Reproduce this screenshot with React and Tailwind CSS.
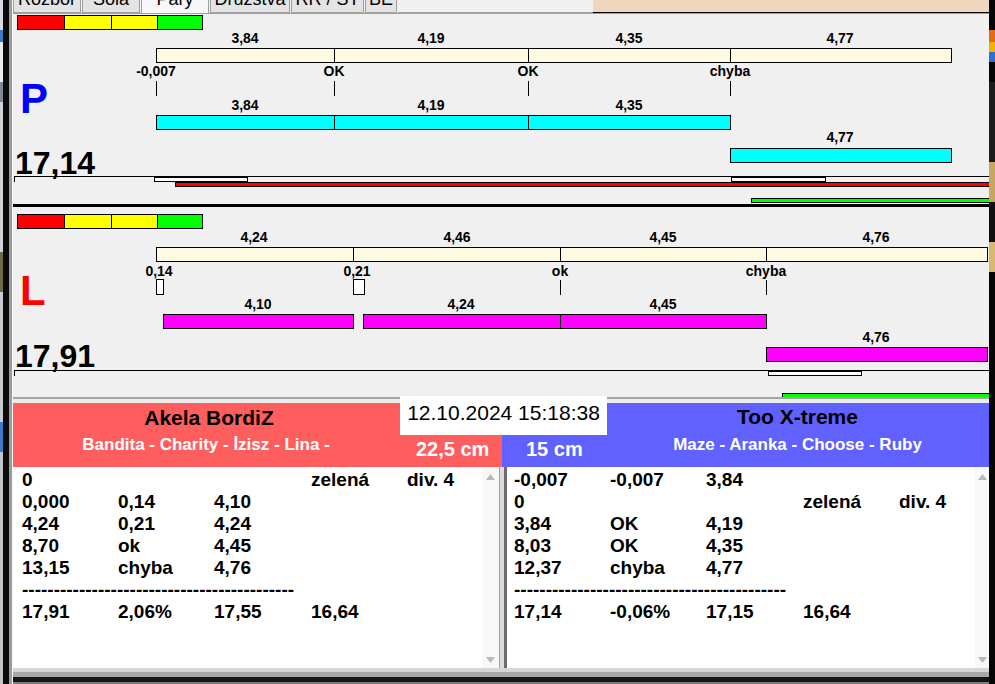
import React from 'react';

const X0 = 13;

const panelP = {
  origin: 14,
  bars: [
    { xs: [156, 334, 528, 730, 951], y: 48, h: 15, color: 'bg-[#fffbe3]' },
    { xs: [156, 334, 528, 730], y: 115, h: 15, color: 'bg-[#00ffff]' },
    { xs: [730, 951], y: 148, h: 15, color: 'bg-[#00ffff]' },
  ],
  labels: [
    { t: '3,84', cx: 245, y: 31 }, { t: '4,19', cx: 431, y: 31 },
    { t: '4,35', cx: 629, y: 31 }, { t: '4,77', cx: 840, y: 31 },
    { t: '-0,007', cx: 156, y: 64 }, { t: 'OK', cx: 334, y: 64 },
    { t: 'OK', cx: 528, y: 64 }, { t: 'chyba', cx: 730, y: 64 },
    { t: '3,84', cx: 245, y: 98 }, { t: '4,19', cx: 431, y: 98 },
    { t: '4,35', cx: 629, y: 98 }, { t: '4,77', cx: 840, y: 130 },
  ],
  ticks: [156, 334, 528, 730].map((x) => ({ x, y: 81, h: 15 })),
  boxes: [],
  line: 176,
  strips: [
    { x1: 154, x2: 247, y: 177, color: 'bg-white' },
    { x1: 731, x2: 825, y: 177, color: 'bg-white' },
    { x1: 175, x2: 1000, y: 182, color: 'bg-[#ff0000]' },
    { x1: 751, x2: 1000, y: 198, color: 'bg-[#00ff00]' },
  ],
};

const panelL = {
  origin: 207,
  bars: [
    { xs: [156, 353, 560, 766, 987], y: 247, h: 15, color: 'bg-[#fffbe3]' },
    { xs: [163, 353], y: 314, h: 15, color: 'bg-[#ff00ff]' },
    { xs: [363, 560, 766], y: 314, h: 15, color: 'bg-[#ff00ff]' },
    { xs: [766, 987], y: 347, h: 15, color: 'bg-[#ff00ff]' },
  ],
  labels: [
    { t: '4,24', cx: 254, y: 230 }, { t: '4,46', cx: 457, y: 230 },
    { t: '4,45', cx: 663, y: 230 }, { t: '4,76', cx: 876, y: 230 },
    { t: '0,14', cx: 159, y: 264 }, { t: '0,21', cx: 357, y: 264 },
    { t: 'ok', cx: 560, y: 264 }, { t: 'chyba', cx: 766, y: 264 },
    { t: '4,10', cx: 258, y: 297 }, { t: '4,24', cx: 461, y: 297 },
    { t: '4,45', cx: 663, y: 297 }, { t: '4,76', cx: 876, y: 330 },
  ],
  ticks: [560, 766].map((x) => ({ x, y: 280, h: 15 })),
  boxes: [
    { x1: 156, x2: 163, y: 279, h: 16 },
    { x1: 353, x2: 364, y: 279, h: 16 },
  ],
  line: 370,
  strips: [
    { x1: 768, x2: 861, y: 371, color: 'bg-white' },
    { x1: 782, x2: 1000, y: 393, color: 'bg-[#00ff00]' },
  ],
};

function ColorStrip() {
  return (
    <div className="flex h-[15px] w-[186px] border border-black">
      <div className="w-[46px] bg-[#ff0000]" />
      <div className="w-[47px] bg-[#ffff00] border-l border-black" />
      <div className="w-[46px] bg-[#ffff00] border-l border-black" />
      <div className="flex-1 bg-[#00ff00] border-l border-black" />
    </div>
  );
}

function Chart({ data }) {
  const o = data.origin;
  return (
    <div className="absolute inset-0">
      {data.bars.map((b, i) =>
        b.xs.slice(0, -1).map((x, j) => (
          <div
            key={`${i}-${j}`}
            className={`absolute border border-black ${b.color}`}
            style={{ left: x - X0, top: b.y - o, width: b.xs[j + 1] - x + 1, height: b.h }}
          />
        ))
      )}
      {data.labels.map((l, i) => (
        <div
          key={i}
          className="absolute -translate-x-1/2 whitespace-nowrap text-[14px] leading-[14px] font-bold text-black"
          style={{ left: l.cx - X0, top: l.y - o }}
        >
          {l.t}
        </div>
      ))}
      {data.ticks.map((t, i) => (
        <div key={i} className="absolute w-px bg-black" style={{ left: t.x - X0, top: t.y - o, height: t.h }} />
      ))}
      {data.boxes.map((b, i) => (
        <div
          key={i}
          className="absolute border border-black bg-white"
          style={{ left: b.x1 - X0, top: b.y - o, width: b.x2 - b.x1 + 1, height: b.h }}
        />
      ))}
      <div className="absolute left-[1px] right-0 h-px bg-black" style={{ top: data.line - o }} />
      <div className="absolute left-[1px] w-px h-[6px] bg-black" style={{ top: data.line - o }} />
      {data.strips.map((s, i) => (
        <div
          key={i}
          className={`absolute h-[5px] border border-black ${s.color}`}
          style={{ left: s.x1 - X0, top: s.y - o, width: s.x2 - s.x1 + 1 }}
        />
      ))}
    </div>
  );
}

function Tabs() {
  const tabs = [
    { t: 'Rozbor', w: 68 },
    { t: 'Sóla', w: 58 },
    { t: 'Páry', w: 68, active: true },
    { t: 'Družstva', w: 80 },
    { t: 'RR / ST', w: 73 },
    { t: 'BE', w: 32 },
  ];
  return (
    <div className="flex h-[13px] shrink-0 overflow-hidden">
      {tabs.map((tab) => (
        <div
          key={tab.t}
          className={`flex justify-center overflow-hidden border-x border-b border-[#a0a0a0] mr-[1px] ${
            tab.active ? 'bg-[#f7f7f7] border-b-0' : 'bg-[#e4e4e4]'
          }`}
          style={{ width: tab.w }}
        >
          <span className="-mt-[10px] text-[18px] leading-[18px] text-black whitespace-nowrap">{tab.t}</span>
        </div>
      ))}
      <div className="w-[195px] bg-[#f0f0f0] border-b border-[#a0a0a0]" />
      <div className="flex-1 bg-[#efd6bd] border-b border-black" />
    </div>
  );
}

function Panel({ data, letter, letterColor, total, stripPt, letterMt, totalMt, className }) {
  return (
    <div className={`relative overflow-hidden bg-[#f0f0f0] shrink-0 ${className}`}>
      <Chart data={data} />
      <div className="relative flex flex-col items-start pl-[4px]" style={{ paddingTop: stripPt }}>
        <ColorStrip />
        <div className={`ml-[3px] text-[42px] leading-none font-bold ${letterColor}`} style={{ marginTop: letterMt }}>
          {letter}
        </div>
        <div className="-ml-[2px] text-[32px] leading-none font-bold text-black" style={{ marginTop: totalMt }}>
          {total}
        </div>
      </div>
    </div>
  );
}

function Arrow({ up }) {
  return (
    <svg width="9" height="6" viewBox="0 0 9 6" className="fill-[#b8b8b8]">
      {up ? <path d="M0 6 L4.5 0 L9 6 Z" /> : <path d="M0 0 L4.5 6 L9 0 Z" />}
    </svg>
  );
}

const COLS = 'grid grid-cols-[96px_96px_97px_96px_96px] whitespace-nowrap';

function DataList({ rows, total, padLeft, scrollW }) {
  return (
    <div className="flex h-full bg-white">
      <div
        className="flex-1 min-w-0 overflow-hidden pt-[2px] text-[19px] leading-[22px] font-bold text-black"
        style={{ paddingLeft: padLeft }}
      >
        {rows.map((r, i) => (
          <div key={i} className={COLS}>
            {r.map((c, j) => (
              <span key={j}>{c}</span>
            ))}
          </div>
        ))}
        <div className="whitespace-nowrap">{'-'.repeat(43)}</div>
        <div className={COLS}>
          {total.map((c, j) => (
            <span key={j}>{c}</span>
          ))}
        </div>
      </div>
      <div className="flex shrink-0 flex-col items-center justify-between pt-[7px] pb-[5px] bg-[#f8f8f8]" style={{ width: scrollW }}>
        <Arrow up />
        <Arrow />
      </div>
    </div>
  );
}

export default function App() {
  return (
    <div className="flex w-[995px] h-[684px] overflow-hidden bg-[#f0f0f0] font-[family-name:'Liberation_Sans',Arial,sans-serif]">
      {/* left window edge */}
      <div className="flex shrink-0 w-[13px]">
        <div className="w-[3px] flex flex-col">
          <div className="h-[30px] bg-[#d8dde4]" />
          <div className="h-[12px] bg-[#3a78c8]" />
          <div className="h-[40px] bg-[#e8ecf0]" />
          <div className="h-[20px] bg-[#7f8a96]" />
          <div className="h-[150px] bg-[#d0d4d8]" />
          <div className="h-[40px] bg-[#6d6a4a]" />
          <div className="h-[130px] bg-[#c8ccd0]" />
          <div className="h-[30px] bg-[#3a78c8]" />
          <div className="flex-1 bg-[#c0c4c8]" />
        </div>
        <div className="w-[6px] bg-[#0b0b0b]" />
        <div className="w-[3px] bg-[#9c9c9c]" />
        <div className="w-px bg-[#f8f8f8]" />
      </div>

      {/* main window */}
      <div className="flex flex-col w-[976px] shrink-0">
        <Tabs />
        <Panel
          data={panelP}
          letter="P"
          letterColor="text-[#0000ff]"
          total="17,14"
          stripPt={1}
          letterMt={48}
          totalMt={27}
          className="h-[194px] border-t border-[#a0a0a0] border-b-[3px] border-b-black"
        />
        <Panel
          data={panelL}
          letter="L"
          letterColor="text-[#ff0000]"
          total="17,91"
          stripPt={7}
          letterMt={41}
          totalMt={28}
          className="h-[190px]"
        />
        <div className="h-[6px] shrink-0 border-t-2 border-[#a4a4a4] bg-[#ececec]" />

        <div className="relative flex flex-col flex-1">
          {/* headers */}
          <div className="flex h-[64px] shrink-0">
            <div className="flex w-[489px] shrink-0 bg-[#ff5e5e]">
              <div className="flex w-[392px] flex-col items-center pt-[4px]">
                <div className="text-[21px] leading-none font-bold text-black">Akela BordiZ</div>
                <div className="mt-[8px] -ml-[6px] text-[17px] leading-none font-bold text-white whitespace-nowrap">
                  Bandita - Charity - İzisz - Lina -
                </div>
              </div>
              <div className="pt-[36px] pl-[11px] text-[20px] leading-none font-bold text-white whitespace-nowrap">22,5 cm</div>
            </div>
            <div className="flex flex-1 bg-[#6161ff]">
              <div className="w-[104px] pt-[36px] pl-[24px] text-[20px] leading-none font-bold text-white whitespace-nowrap">15 cm</div>
              <div className="flex flex-1 flex-col items-center pt-[3px]">
                <div className="text-[21px] leading-none font-bold text-black">Too X-treme</div>
                <div className="mt-[9px] text-[17px] leading-none font-bold text-white whitespace-nowrap">
                  Maze - Aranka - Choose - Ruby
                </div>
              </div>
            </div>
          </div>

          {/* lists */}
          <div className="flex h-[201px] shrink-0">
            <div className="w-[487px] shrink-0 border-r border-[#a0a0a0]">
              <DataList
                padLeft={9}
                scrollW={17}
                rows={[
                  ['0', '', '', 'zelená', 'div. 4'],
                  ['0,000', '0,14', '4,10'],
                  ['4,24', '0,21', '4,24'],
                  ['8,70', 'ok', '4,45'],
                  ['13,15', 'chyba', '4,76'],
                ]}
                total={['17,91', '2,06%', '17,55', '16,64']}
              />
            </div>
            <div className="w-[4px] shrink-0 bg-[#dcdcdc]" />
            <div className="w-[3px] shrink-0 bg-[#6c6c6c]" />
            <div className="flex-1 min-w-0">
              <DataList
                padLeft={7}
                scrollW={14}
                rows={[
                  ['-0,007', '-0,007', '3,84'],
                  ['0', '', '', 'zelená', 'div. 4'],
                  ['3,84', 'OK', '4,19'],
                  ['8,03', 'OK', '4,35'],
                  ['12,37', 'chyba', '4,77'],
                ]}
                total={['17,14', '-0,06%', '17,15', '16,64']}
              />
            </div>
          </div>

          {/* window bottom frame */}
          <div className="flex flex-col flex-1">
            <div className="h-[4px] bg-[#d6d6d6]" />
            <div className="h-[5px] bg-[#a8a8a8]" />
            <div className="h-[5px] bg-[#161616]" />
            <div className="flex-1 bg-[#7a7a7a]" />
          </div>

          {/* date stamp over the headers */}
          <div className="absolute left-[387px] top-[-7px] w-[207px] h-[39px] bg-white pt-[6px] text-center text-[21px] leading-none text-black whitespace-nowrap">
            12.10.2024 15:18:38
          </div>
        </div>
      </div>

      {/* right window edge */}
      <div className="flex flex-col w-[6px] shrink-0 bg-[#050505]">
        <div className="h-[30px]" />
        <div className="h-[12px] bg-[#e36b1c]" />
        <div className="h-[10px] bg-[#f4b200]" />
        <div className="h-[10px] bg-[#2f6fd0]" />
        <div className="h-[20px]" />
        <div className="h-[80px] bg-[#1c1c1c]" />
        <div className="h-[40px] bg-[#c8a860]" />
        <div className="h-[40px] bg-[#111]" />
        <div className="h-[30px] bg-[#d8b870]" />
        <div className="flex-1" />
      </div>
    </div>
  );
}
